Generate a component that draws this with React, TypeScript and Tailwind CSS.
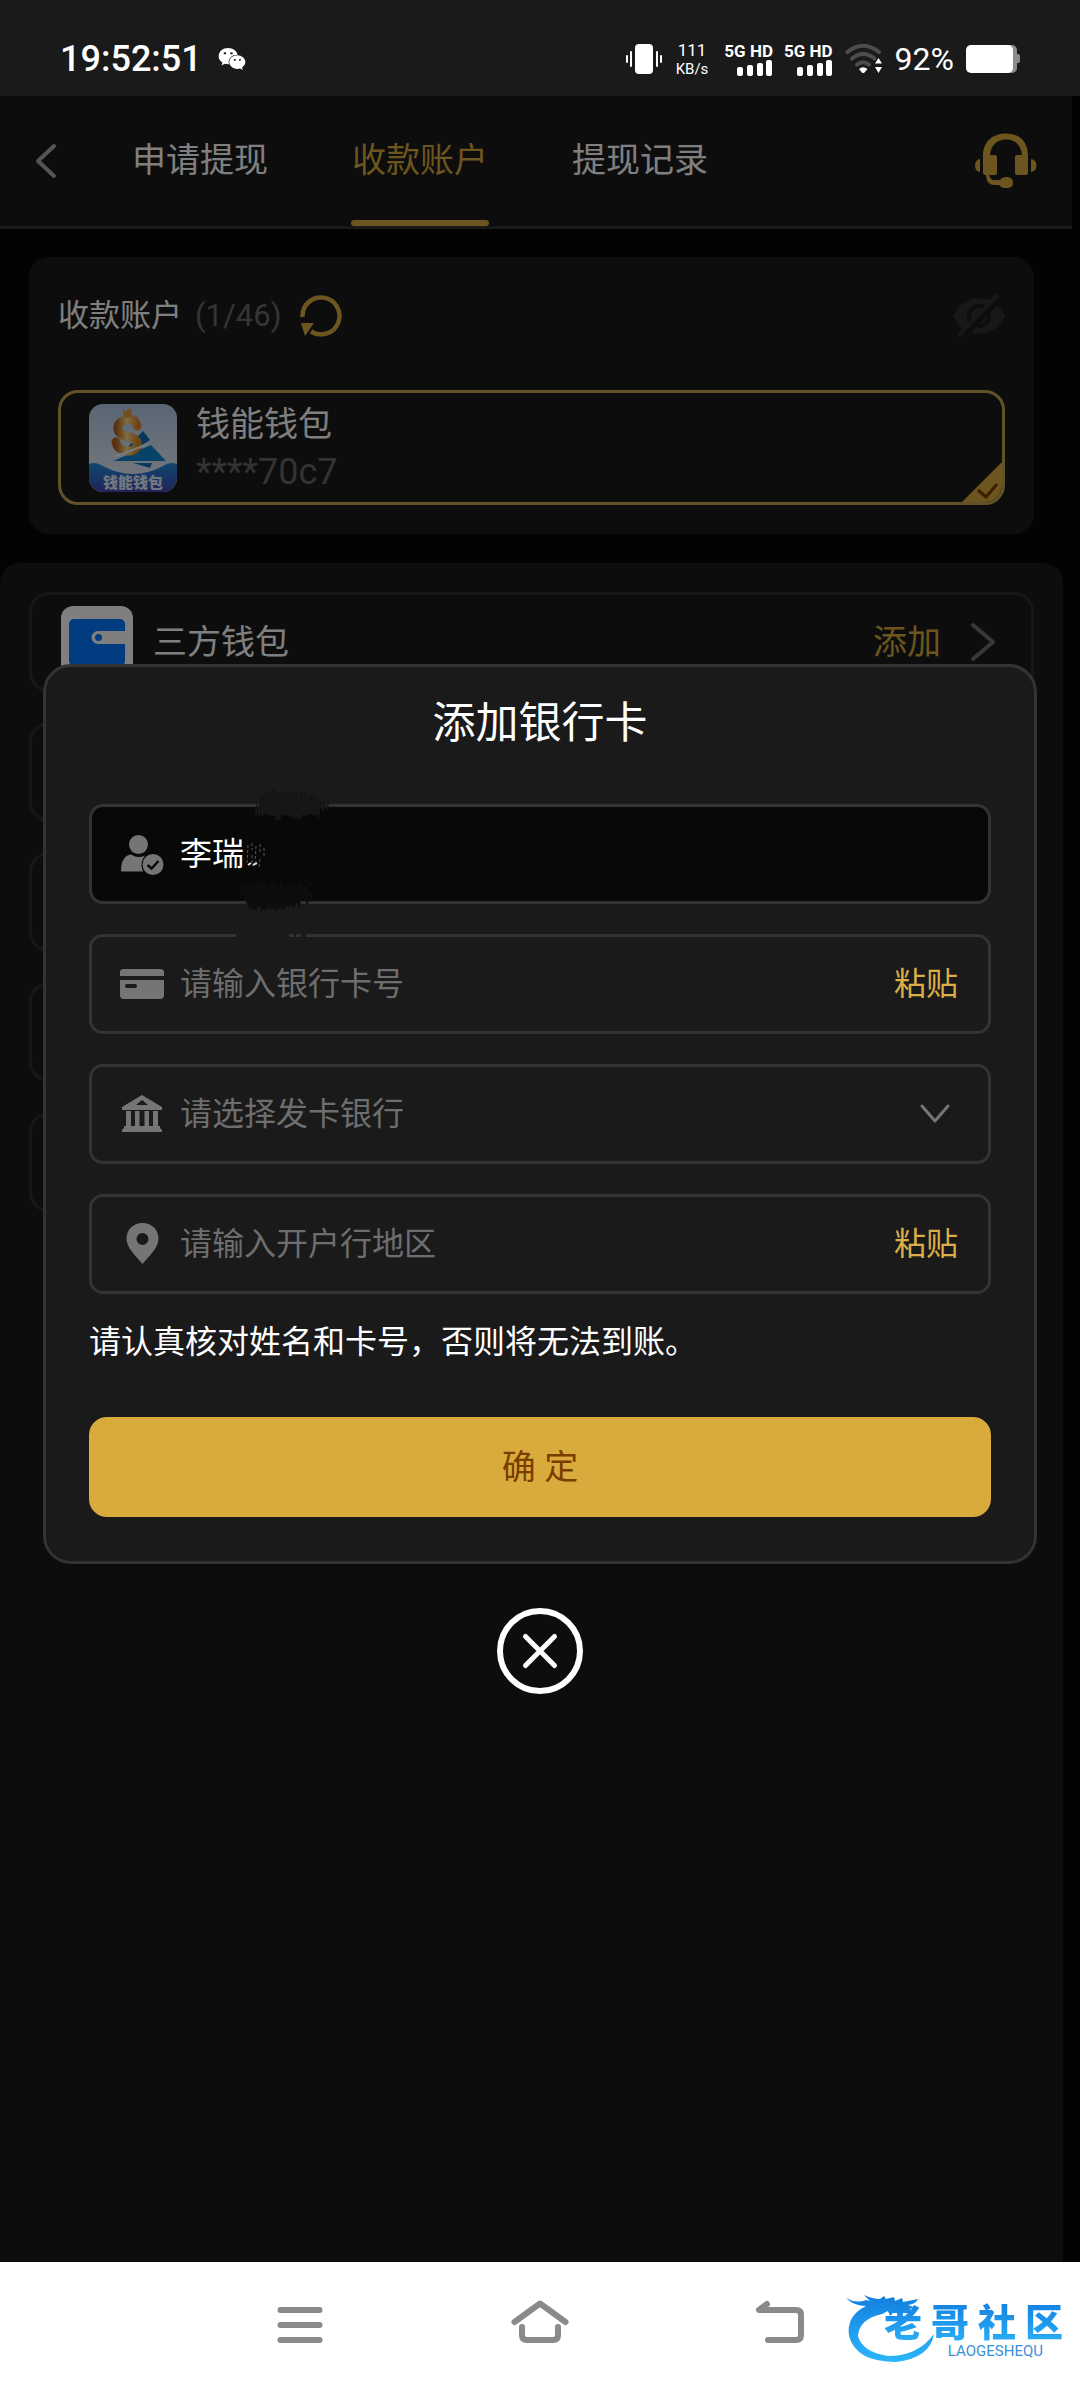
import React from "react";
import { FaWeixin } from "react-icons/fa";

const tabs = [
  { label: "申请提现", active: false },
  { label: "收款账户", active: true },
  { label: "提现记录", active: false },
];

function SignalBars() {
  return (
    <span className="flex flex-col items-end">
      <span className="text-[17px] leading-[18px] font-bold whitespace-nowrap">5G HD</span>
      <svg width="36" height="16" viewBox="0 0 36 16" fill="#fff" aria-hidden="true">
        <rect x="0" y="7" width="6" height="9" rx="2" />
        <rect x="10" y="5" width="6" height="11" rx="2" />
        <rect x="20" y="3" width="6" height="13" rx="2" />
        <rect x="29" y="0" width="6" height="16" rx="2" />
      </svg>
    </span>
  );
}

function StatusBar() {
  return (
    <div className="flex h-24 shrink-0 items-center bg-[#1a1a1a] pt-[22px] pr-[60px] pl-[60px] text-white">
      <span className="text-[36px] leading-10 font-medium">19:52:51</span>
      <FaWeixin className="ml-4 text-[28px]" aria-hidden="true" />
      <div className="ml-auto flex items-center">
        <svg width="38" height="32" viewBox="0 0 38 32" fill="#fff" aria-hidden="true">
          <rect x="10" y="1" width="18" height="30" rx="4" />
          <rect x="5" y="8" width="2" height="16" rx="1" />
          <rect x="31" y="8" width="2" height="16" rx="1" />
          <rect x="1" y="12" width="2" height="8" rx="1" />
          <rect x="35" y="12" width="2" height="8" rx="1" />
        </svg>
        <span className="mr-4 ml-[13px] flex flex-col items-center">
          <span className="text-[17px] leading-[20px]">111</span>
          <span className="text-[15px] leading-[18px]">KB/s</span>
        </span>
        <span className="flex gap-[11px]">
          <SignalBars />
          <SignalBars />
        </span>
        <svg className="ml-3" width="38" height="32" viewBox="0 0 38 32" fill="none" aria-hidden="true">
          <g stroke="#4d4d4d" strokeWidth="4" strokeLinecap="round">
            <path d="M2.500 9 Q18 -3.500 34 9" />
            <path d="M7 15.500 Q18 6.500 29.500 15.500" />
            <path d="M12 21.500 Q18 17 24 21.500" />
          </g>
          <path d="M14 26 Q18 22.500 22.500 26 L19.500 29.500 Q18 30.500 16.800 29.500 Z" fill="#fff" />
          <path d="M33.500 15 L37 20.500 H30 Z M33.500 30 L30 24 H37 Z" fill="#fff" />
        </svg>
        <span className="ml-3 text-[32px] leading-8">92%</span>
        <svg className="ml-3" width="54" height="28" viewBox="0 0 54 28" aria-hidden="true">
          <path d="M40 0 h6 a5 5 0 0 1 5 5 v4 h1 a2 2 0 0 1 2 2 v5 a2 2 0 0 1 -2 2 h-1 v5 a5 5 0 0 1 -5 5 h-6 Z" fill="#8c8c8c" />
          <rect x="0" y="0" width="47" height="28" rx="5" fill="#fff" />
        </svg>
      </div>
    </div>
  );
}

function Header() {
  return (
    <header className="mr-2 flex h-[133px] shrink-0 border-b-[3px] border-[#333] bg-[#1a1a1a]">
      <button type="button" aria-label="返回" className="pl-[34px]">
        <svg width="24" height="38" viewBox="0 0 24 38" fill="none" stroke="#aaa" strokeWidth="4" strokeLinecap="round" strokeLinejoin="round">
          <path d="M20 4 L4 19 L20 34" />
        </svg>
      </button>
      <nav className="ml-[73px] flex gap-[82px]">
        {tabs.map((t) => (
          <button key={t.label} type="button" className="flex flex-col items-center">
            <span
              className={
                t.active
                  ? "flex flex-1 items-center px-px pt-1 text-[34px] text-[#d9ab3c]"
                  : "flex flex-1 items-center px-px pt-1 text-[34px] text-white"
              }
            >
              {t.label}
            </span>
            <span className={t.active ? "h-1.5 w-full rounded-full bg-[#d9ab3c]" : "h-1.5 w-full"} />
          </button>
        ))}
      </nav>
      <button type="button" aria-label="客服" className="mr-[35px] ml-auto">
        <svg width="62" height="56" viewBox="0 0 62 56" aria-hidden="true">
          <path d="M8 23 C8 8 18 0.500 31 0.500 S53 8 53 23 V40 Q53 42 51 42 H42 Q40 42 40 40 V24 Q40 22 42 22 H47 C46 12 40 6.500 31 6.500 S16 12 15 22 H20 Q22 22 22 24 V40 Q22 42 20 42 H14 Q15.500 47 19 47 H25 Q27 44 31 44 H33 Q38 45 38 49.500 Q38 54.500 33 55 H29 Q26 55 24.500 52 H19 Q11 51.500 11 42 H10 Q8 42 8 40 Z" fill="#d9ab3c" />
          <path d="M5 26 Q0 27 0 32.500 Q0 38 5 39 Z M56 26 Q61.500 27 61.500 32.500 Q61.500 38 56 39 Z" fill="#d9ab3c" />
        </svg>
      </button>
    </header>
  );
}

function WalletLogo() {
  return (
    <svg width="88" height="88" viewBox="0 0 88 88" className="shrink-0 rounded-[14px]" aria-hidden="true">
      <defs>
        <linearGradient id="sky" x1="0" y1="0" x2="0" y2="1">
          <stop offset="0" stopColor="#b4cbe8" />
          <stop offset="1" stopColor="#f0f6ff" />
        </linearGradient>
        <linearGradient id="sea" x1="0" y1="0" x2="0" y2="1">
          <stop offset="0" stopColor="#1e90e0" />
          <stop offset="1" stopColor="#4646b4" />
        </linearGradient>
        <linearGradient id="gold" x1="0" y1="0" x2="1" y2="0">
          <stop offset="0" stopColor="#b4601c" />
          <stop offset="0.5" stopColor="#ffd98a" />
          <stop offset="1" stopColor="#d98a2a" />
        </linearGradient>
      </defs>
      <rect width="88" height="88" fill="url(#sky)" />
      <path d="M0 60 Q7 57 14 62 Q44 78 74 62 Q81 57 88 60 V88 H0 Z" fill="url(#sea)" />
      <path d="M54 27 L61 36 L52 42 L36 46 Z" fill="#0f6cb8" />
      <path d="M62 41 L77 57 H24 Z" fill="#0f86d0" />
      <path d="M44 59 H63 L61 64 Z" fill="#1474c0" />
      <path d="M48 22 Q46 13 36 16 Q26 20 30 28 Q33 32 41 33 Q50 36 48 43 Q44 49 34 46 Q28 44 27 38" fill="none" stroke="url(#gold)" strokeWidth="9" strokeLinecap="round" />
      <path d="M34 5 L37 7 L40 4 L43 7 L42 13 L35 14 Z" fill="#e0a040" />
      <path d="M24 53 Q40 48 58 40" fill="none" stroke="#eef6ff" strokeWidth="2" />
      <text x="44" y="84" textAnchor="middle" fontSize="15" fontWeight="900" fill="#e6eefc">钱能钱包</text>
    </svg>
  );
}

function AccountCard() {
  return (
    <section className="mt-7 mr-[46px] ml-[29px] rounded-[20px] bg-[#1a1a1a] p-[29px]">
      <div className="mb-11 flex h-[60px] items-center">
        <h2 className="text-[31px] text-white">收款账户</h2>
        <span className="ml-[13px] text-[31px] text-[#6b6b6b]">(1/46)</span>
        <button type="button" aria-label="刷新" className="ml-[18px]">
          <svg width="44" height="44" viewBox="0 0 44 44" fill="none" aria-hidden="true">
            <path d="M3.500 23 A18.500 18.500 0 1 1 12 37.500" stroke="#d9ab3c" strokeWidth="4.500" />
            <path d="M2 29 L15 29 L6 42 Z" fill="#d9ab3c" />
          </svg>
        </button>
        <button type="button" aria-label="显示账号" className="ml-auto">
          <svg width="52" height="44" viewBox="0 0 52 44" aria-hidden="true">
            <path d="M0 22 Q10 4 26 4 Q42 4 52 22 Q42 40 26 40 Q10 40 0 22 Z" fill="#303030" />
            <circle cx="26" cy="22" r="10" fill="#303030" stroke="#1a1a1a" strokeWidth="4" />
            <path d="M8 45 L48 3" stroke="#1a1a1a" strokeWidth="6" />
            <path d="M5 42 L45 1" stroke="#303030" strokeWidth="4" />
          </svg>
        </button>
      </div>
      <button type="button" className="relative flex h-[115px] w-full items-center overflow-hidden rounded-[20px] border-[3px] border-[#c4a550] pl-7 text-left">
        <WalletLogo />
        <span className="ml-[19px] flex flex-col">
          <span className="text-[34px] leading-[48px] text-white">钱能钱包</span>
          <span className="text-[36px] leading-[48px] text-[#666]">****70c7</span>
        </span>
        <svg className="absolute right-0 bottom-0" width="40" height="40" viewBox="0 0 40 40" fill="none" aria-hidden="true">
          <path d="M40 0 V40 H0 Z" fill="#d9ab3c" />
          <path d="M16 28 L24 35 L35 22" stroke="#7a3d00" strokeWidth="3" />
        </svg>
      </button>
    </section>
  );
}

function MethodList() {
  return (
    <section className="mt-[29px] mr-[17px] flex flex-1 flex-col gap-[30px] rounded-t-[20px] bg-[#1a1a1a] p-[29px]">
      <button type="button" className="flex h-[100px] items-center rounded-[20px] border-[3px] border-[#2e2e2e] pr-[34px] pl-[29px]">
        <svg width="72" height="72" viewBox="0 0 72 72" aria-hidden="true">
          <rect width="72" height="72" rx="12" fill="#fff" />
          <rect x="8" y="13" width="56" height="47" rx="5" fill="#0078ff" />
          <path d="M64 25 H37 A6.500 6.500 0 0 0 37 38 H64 Z" fill="#fff" />
          <circle cx="37.500" cy="31.500" r="3.500" fill="#0078ff" />
        </svg>
        <span className="ml-5 text-[34px] text-white">三方钱包</span>
        <span className="ml-auto text-[34px] text-[#d9ab3c]">添加</span>
        <svg className="ml-7" width="28" height="40" viewBox="0 0 28 40" fill="none" stroke="#707070" strokeWidth="4" strokeLinecap="round" strokeLinejoin="round" aria-hidden="true">
          <path d="M4 3 L24 20 L4 37" />
        </svg>
      </button>
      {[0, 1, 2, 3].map((n) => (
        <div key={n} className="h-[100px] rounded-[20px] border-[3px] border-[#2e2e2e]" />
      ))}
    </section>
  );
}

function Field({ icon, tone, children }: { icon: React.ReactNode; tone?: "dark"; children: React.ReactNode }) {
  return (
    <div
      className={
        tone === "dark"
          ? "flex h-[100px] items-center gap-4 rounded-[14px] border-[3px] border-[#333] bg-[#080808] pr-[30px] pl-7"
          : "flex h-[100px] items-center gap-4 rounded-[14px] border-[3px] border-[#333] pr-[30px] pl-7"
      }
    >
      {icon}
      {children}
    </div>
  );
}

function Paste() {
  return (
    <button type="button" className="shrink-0 text-[32px] text-[#dcae48]">
      粘贴
    </button>
  );
}

const inputClass = "min-w-0 flex-1 bg-transparent text-[32px] leading-[48px] text-white outline-none placeholder:text-[#6e6e6e]";

function Smudges() {
  return (
    <svg className="pointer-events-none absolute top-[113px] left-[183px]" width="130" height="200" viewBox="0 0 130 200" aria-hidden="true">
      <defs>
        <filter id="brush" x="-20%" y="-40%" width="140%" height="180%">
          <feTurbulence type="fractalNoise" baseFrequency="0.35 0.06" numOctaves="2" seed="4" result="n" />
          <feDisplacementMap in="SourceGraphic" in2="n" scale="14" xChannelSelector="R" yChannelSelector="G" />
          <feGaussianBlur stdDeviation="0.600" />
        </filter>
      </defs>
      <path d="M28 30 L32 18 L40 12 L60 13 L84 16 L96 22 L97 30 L86 36 L62 37 L42 36 L28 35 Z" fill="#121212" filter="url(#brush)" />
      <path d="M10 108 L18 104 L82 104 L83 118 L70 124 L48 129 L27 130 L18 124 L12 114 Z" fill="#0a0a0a" filter="url(#brush)" />
      <path d="M7 150 H60 V158 H7 Z M65 150 H67 V158 H65 Z M72 150 H77 V158 H72 Z" fill="#1a1a1a" />
      <path d="M19 65 L18 83 M23 63 V70 M23 75 V86 M27 66 L26 84 M31 64 V72 M31 79 L30 88 M35 68 V76" stroke="#555" strokeWidth="1" strokeDasharray="3 2" />
      <path d="M19 85 L22 83 M24 85 L28 83" stroke="#ddd" strokeWidth="2" />
    </svg>
  );
}

function BankCardDialog() {
  const grey = "#757575";
  return (
    <div role="dialog" aria-modal="true" aria-labelledby="dialog-title" className="relative w-full rounded-[28px] border-[3px] border-[#333] bg-[#1a1a1a] px-[43px] pt-[26px] pb-11">
      <h1 id="dialog-title" className="mb-[51px] text-center text-[43px] leading-[60px] text-white">添加银行卡</h1>
      <form className="flex flex-col gap-[30px]" onSubmit={(e) => e.preventDefault()}>
        <Field
          tone="dark"
          icon={
            <svg width="44" height="44" viewBox="0 0 44 44" className="shrink-0" aria-hidden="true">
              <circle cx="18.500" cy="12.500" r="9.500" fill={grey} />
              <path d="M1 39 Q1 24 11 22.500 Q18 27 25 23.500 Q21 29 21.500 34 Q22 37 23 39.500 H3 Q1 39.500 1 39 Z" fill={grey} />
              <circle cx="33" cy="32.500" r="10.500" fill={grey} />
              <path d="M27.500 33 L31.500 36.500 L38.500 29" stroke="#080808" strokeWidth="2.500" fill="none" />
            </svg>
          }
        >
          <input aria-label="姓名" className={inputClass} defaultValue="李瑞" readOnly />
        </Field>
        <Field
          icon={
            <svg width="44" height="44" viewBox="0 0 44 44" className="shrink-0" aria-hidden="true">
              <path d="M4 7 H40 Q44 7 44 10 V14 H0 V10 Q0 7 4 7 Z M0 18 H44 V33 Q44 37 40 37 H4 Q0 37 0 33 Z" fill={grey} />
              <rect x="5" y="22" width="12" height="4" rx="2" fill="#1a1a1a" />
            </svg>
          }
        >
          <input aria-label="银行卡号" className={inputClass} placeholder="请输入银行卡号" />
          <Paste />
        </Field>
        <Field
          icon={
            <svg width="44" height="44" viewBox="0 0 44 44" className="shrink-0" fill={grey} aria-hidden="true">
              <path fillRule="evenodd" d="M22 3 L42 15 V18 H2 V15 Z M22 8 L16 13 H28 Z" />
              <path d="M6 19 H11 V34 H6 Z M15 19 H19.500 V34 H15 Z M24.500 19 H29 V34 H24.500 Z M33 19 H38 V34 H33 Z" />
              <path d="M4 34 H40 V36 L42 38 V40 H2 V38 L4 36 Z" />
            </svg>
          }
        >
          <select aria-label="发卡银行" defaultValue="" className="min-w-0 flex-1 appearance-none bg-transparent text-[32px] leading-[48px] text-[#6e6e6e] outline-none">
            <option value="">请选择发卡银行</option>
          </select>
          <svg className="mr-[7px] shrink-0" width="32" height="24" viewBox="0 0 32 24" fill="none" stroke={grey} strokeWidth="3" strokeLinecap="round" strokeLinejoin="round" aria-hidden="true">
            <path d="M3 4 L16 19 L29 4" />
          </svg>
        </Field>
        <Field
          icon={
            <svg width="44" height="44" viewBox="0 0 44 44" className="shrink-0" aria-hidden="true">
              <path fillRule="evenodd" d="M22.500 1 C13 1 6.500 8 6.500 16.500 C6.500 26 16 34 22.500 42 C29 34 38.500 26 38.500 16.500 C38.500 8 32 1 22.500 1 Z M22.500 11 A6 6 0 1 1 22.500 23 A6 6 0 1 1 22.500 11 Z" fill={grey} />
            </svg>
          }
        >
          <input aria-label="开户行地区" className={inputClass} placeholder="请输入开户行地区" />
          <Paste />
        </Field>
        <p className="-mt-[2px] text-[32px] leading-10 text-white">请认真核对姓名和卡号，否则将无法到账。</p>
        <button type="submit" className="mt-[25px] h-[100px] rounded-[18px] bg-[#d9ab3c] text-[34px] text-[#7a3d00]">
          确 定
        </button>
      </form>
      <Smudges />
    </div>
  );
}

function Watermark() {
  return (
    <div className="absolute top-[28px] right-[17px] flex items-start" aria-label="老哥社区">
      <svg width="90" height="74" viewBox="0 0 90 74" className="absolute top-0 -left-[38px]" aria-hidden="true">
        <defs>
          <linearGradient id="ring" x1="0" y1="0" x2="0" y2="1">
            <stop offset="0" stopColor="#127fe0" />
            <stop offset="1" stopColor="#2cb6fa" />
          </linearGradient>
        </defs>
        <path d="M0 8 Q10 14 20 10 L24 11 L18 5 Q27 9 34 9 L38 6 L40 9 L48 7 L49 11 L56 8 L57 12 L72 9 Q70 14 62 15 L70 18 L60 19 L68 22 Q58 25 50 20 L44 26 L42 21 L36 24 Q13 29 12 46 Q16 62 42 66 Q72 66 88 44 Q84 68 50 72 Q10 72 3 46 Q0 26 20 16 Q8 16 0 8 Z" fill="url(#ring)" />
      </svg>
      <div className="relative flex flex-col items-end">
        <div className="flex gap-[9px] bg-linear-to-b from-[#0f74dc] to-[#2cb0f6] bg-clip-text pt-3 text-[38px] leading-[42px] font-black text-transparent">
          {["老", "哥", "社", "区"].map((c) => (
            <span key={c}>{c}</span>
          ))}
        </div>
        <span className="mr-5 text-[15px] leading-[15px] text-[#3d8fd6]">LAOGESHEQU</span>
      </div>
    </div>
  );
}

function SystemNav() {
  return (
    <nav className="relative flex h-[126px] shrink-0 items-center justify-center gap-[180px] bg-white">
      <button type="button" aria-label="最近任务">
        <svg width="60" height="50" viewBox="0 0 60 50" stroke="#8a8a8a" strokeWidth="6" strokeLinecap="round">
          <path d="M10.500 10 H49.500 M10.500 25 H49.500 M10.500 40 H49.500" />
        </svg>
      </button>
      <button type="button" aria-label="主屏幕">
        <svg width="60" height="50" viewBox="0 0 60 50" fill="none" stroke="#8a8a8a" strokeWidth="6" strokeLinecap="round" strokeLinejoin="round">
          <path d="M4.500 22 L30 3.500 L55.500 22" />
          <path d="M12 27 V35 Q12 40 17 40 H43 Q48 40 48 35 V27" />
        </svg>
      </button>
      <button type="button" aria-label="返回上一级">
        <svg width="60" height="50" viewBox="0 0 60 50" fill="none" stroke="#8a8a8a" strokeWidth="6" strokeLinecap="round" strokeLinejoin="round">
          <path d="M17 4 L9 10 H46 Q51 10 51 15 V35 Q51 40 46 40 H18" />
        </svg>
      </button>
      <Watermark />
    </nav>
  );
}

export default function App() {
  return (
    <div className="flex min-h-screen flex-col bg-[#030303] font-[Roboto,'Noto_Sans_CJK_SC',sans-serif]">
      <StatusBar />
      <main className="relative flex flex-1 flex-col bg-[#070707]">
        <Header />
        <AccountCard />
        <MethodList />
        <div className="absolute inset-0 flex flex-col items-center justify-center bg-black/50 px-[43px]">
          <BankCardDialog />
          <button type="button" aria-label="关闭" className="mt-11">
            <svg width="86" height="86" viewBox="0 0 86 86" fill="none" stroke="#fff" strokeLinecap="round">
              <circle cx="43" cy="43" r="40" strokeWidth="6" />
              <path d="M28.500 28.500 L57.500 57.500 M57.500 28.500 L28.500 57.500" strokeWidth="5" />
            </svg>
          </button>
        </div>
      </main>
      <SystemNav />
    </div>
  );
}
